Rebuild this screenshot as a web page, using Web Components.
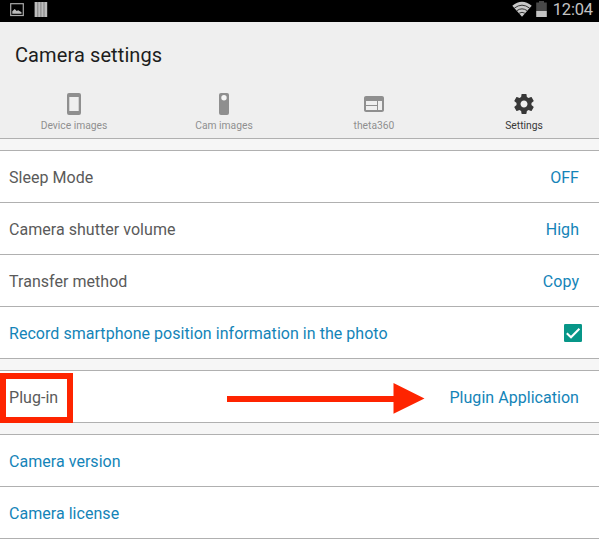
<!DOCTYPE html>
<html lang="en">
<head>
<meta charset="utf-8">
<title>Camera settings</title>
<style>
html,body{margin:0;height:100%;overflow:hidden;background:#f6f6f6;font-family:Roboto,"Noto Sans",sans-serif}
</style>
</head>
<body>
<settings-screen></settings-screen>
<script>
const define = (name, html) => customElements.define(name, class extends HTMLElement {
  constructor() {
    super();
    const t = document.createElement('template');
    t.innerHTML = html;
    this.attachShadow({mode: 'open'}).append(t.content.cloneNode(true));
  }
});

define('status-bar', `
<style>
:host{display:flex;align-items:flex-start;height:21.5px;background:#000;color:#c3c3c3;box-sizing:border-box;padding:0 6px 0 10px}
svg{display:block}
.strip{margin:1px 0 0 10px}
.wifi{margin:1px 0 0 auto}
.battery{margin:1px 0 0 4px}
span{font-size:16.5px;line-height:20px;margin-left:6px;letter-spacing:-.15px}
</style>
<svg width="14" height="14" viewBox="0 0 14 14" style="margin-top:3px"><rect x=".7" y=".7" width="12.6" height="11.8" fill="none" stroke="#aaa" stroke-width="1.2"/><path d="M2.3 10.8V8.2L4.7 6l2 2 1.5-.8 3.3 2v1.6z" fill="#bbb"/></svg>
<svg class="strip" width="14" height="17" viewBox="0 0 14 17"><path d="M.6 1h12.6v15H.6z" fill="#bcbcbc"/><path d="M3.8 1v15M6.9 1v15M10 1v15" stroke="#666" stroke-width=".7"/></svg>
<svg class="wifi" width="20" height="16" viewBox="0 0 20 16"><path d="M.3 4.7Q10-3.2 19.7 4.7L10 15.7z" fill="#c9c9c9"/><path d="M2.4 7.1q7.6-5.8 15.2 0M4.8 9.7q5.2-3.7 10.4 0M7.1 12.2q2.9-1.8 5.8 0" fill="none" stroke="#222" stroke-width=".9"/></svg>
<svg class="battery" width="11" height="17" viewBox="0 0 11 17"><path d="M3 0h5v1.5h2.800V10H.2V1.500H3z" fill="#484848"/><path d="M.2 10h10.600v6H.2z" fill="#c3c3c3"/></svg>
<span>12:04</span>`);

define('page-header', `
<style>
:host{display:flex;flex-direction:column;height:116.5px;background:#efefef;border-bottom:1px solid #b0b0b0}
h1{margin:20px 0 0 15px;font-weight:400;font-size:20px;line-height:26px;color:#1d1d1d;letter-spacing:.1px}
nav{display:grid;grid-template-columns:repeat(4,150px);margin-top:24.5px;margin-left:-1px}
</style>
<h1><slot name="title"></slot></h1><nav><slot></slot></nav>`);

define('nav-tab', `
<style>
:host{display:flex;flex-direction:column;align-items:center;color:#8f8f8f;font-size:10.3px;line-height:14px}
:host([active]){color:#383838}
.icon{height:24px;display:flex;margin-bottom:3px}
</style>
<div class="icon"><slot name="icon"></slot></div><slot></slot>`);

define('settings-group', `
<style>:host{display:block;margin-top:11px;border-top:1px solid #b0b0b0;background:#fff}</style><slot></slot>`);

define('setting-row', `
<style>
:host{display:flex;position:relative;align-items:center;justify-content:space-between;padding:2px 20px 0 9px;box-sizing:border-box;height:52px;border-bottom:1px solid #b0b0b0;font-size:16px;line-height:20px;letter-spacing:.04px;color:#5a5a5a}
:host([link]),.value{color:#1484b8}
</style>
<span><slot></slot></span><span class="value"><slot name="value"></slot></span><slot name="mark"></slot>`);

define('check-box', `
<style>:host{display:block;width:18px;height:18px;margin-right:-3px;margin-top:-2px}svg{display:block}</style>
<svg width="18" height="18" viewBox="0 0 18 18"><rect width="18" height="18" rx="1.3" fill="#079688"/><path d="M2.8 9.200 7 13.200 15.400 4.800" fill="none" stroke="#fff" stroke-width="2.100"/></svg>`);

define('highlight-frame', `
<style>:host{position:absolute;left:0;top:2px;width:73px;height:50px;box-sizing:border-box;border:6px solid #fe2400}</style>`);

define('pointer-arrow', `
<style>:host{position:absolute;left:227px;top:11px;width:198px;height:32px}svg{display:block}</style>
<svg width="198" height="32" viewBox="0 0 198 32"><path d="M0 14h166.500V1L197.500 16.500 166.500 31.700V20H0z" fill="#fe2400"/></svg>`);

define('settings-screen', `
<style>:host{display:block;width:599px;height:539px;overflow:hidden}svg{display:block}</style>
<status-bar></status-bar>
<page-header>
<span slot="title">Camera settings</span>
<nav-tab><svg slot="icon" width="24" height="24" viewBox="0 0 24 24"><path fill="currentColor" fill-rule="evenodd" d="M7 1h10q2 0 2 2v18q0 2-2 2H7q-2 0-2-2V3q0-2 2-2zM7.300 5v14h9.400V5z"/></svg>Device images</nav-tab>
<nav-tab><svg slot="icon" width="24" height="24" viewBox="0 0 24 24"><path fill="currentColor" d="M9 1h6q2 0 2 2v18q0 2-2 2H9q-2 0-2-2V3q0-2 2-2z"/><circle cx="12" cy="5.800" r="2.700" fill="#f5f5f5"/></svg>Cam images</nav-tab>
<nav-tab><svg slot="icon" width="24" height="24" viewBox="0 0 24 24"><path fill="currentColor" d="M20 4H4c-1.100 0-1.990.9-1.990 2L2 18c0 1.100.9 2 2 2h16c1.100 0 2-.9 2-2V6c0-1.100-.9-2-2-2zm-5 14H4v-4h11v4zm0-5H4V9h11v4zm5 5h-4V9h4v9z"/></svg>theta360</nav-tab>
<nav-tab active><svg slot="icon" width="24" height="24" viewBox="0 0 24 24"><path fill="currentColor" d="M19.430 12.980c.04-.32.070-.64.070-.98s-.03-.66-.07-.98l2.110-1.650c.19-.15.240-.42.120-.64l-2-3.460c-.12-.22-.39-.3-.61-.22l-2.490 1c-.52-.4-1.080-.73-1.690-.98l-.38-2.650C14.460 2.180 14.250 2 14 2h-4c-.25 0-.46.18-.49.420l-.38 2.650c-.61.250-1.170.590-1.690.980l-2.490-1c-.23-.09-.49 0-.61.220l-2 3.460c-.13.220-.07.490.120.640l2.110 1.650c-.04.320-.07.650-.07.980s.03.660.070.980l-2.110 1.650c-.19.150-.24.420-.12.640l2 3.460c.12.220.39.300.61.220l2.490-1c.52.400 1.080.730 1.690.980l.38 2.650c.03.240.24.420.49.420h4c.25 0 .46-.18.49-.42l.38-2.650c.61-.25 1.170-.59 1.690-.98l2.490 1c.23.090.49 0 .61-.22l2-3.460c.12-.22.070-.49-.12-.64l-2.110-1.650zM12 15.500c-1.930 0-3.500-1.570-3.500-3.500s1.570-3.500 3.500-3.500 3.500 1.570 3.500 3.500-1.570 3.500-3.500 3.500z"/></svg>Settings</nav-tab>
</page-header>
<settings-group>
<setting-row>Sleep Mode<span slot="value">OFF</span></setting-row>
<setting-row>Camera shutter volume<span slot="value">High</span></setting-row>
<setting-row>Transfer method<span slot="value">Copy</span></setting-row>
<setting-row link>Record smartphone position information in the photo<check-box slot="value"></check-box></setting-row>
</settings-group>
<settings-group>
<setting-row>Plug-in<span slot="value">Plugin Application</span><highlight-frame slot="mark"></highlight-frame><pointer-arrow slot="mark"></pointer-arrow></setting-row>
</settings-group>
<settings-group>
<setting-row link>Camera version</setting-row>
<setting-row link>Camera license</setting-row>
</settings-group>`);
</script>
</body>
</html>
